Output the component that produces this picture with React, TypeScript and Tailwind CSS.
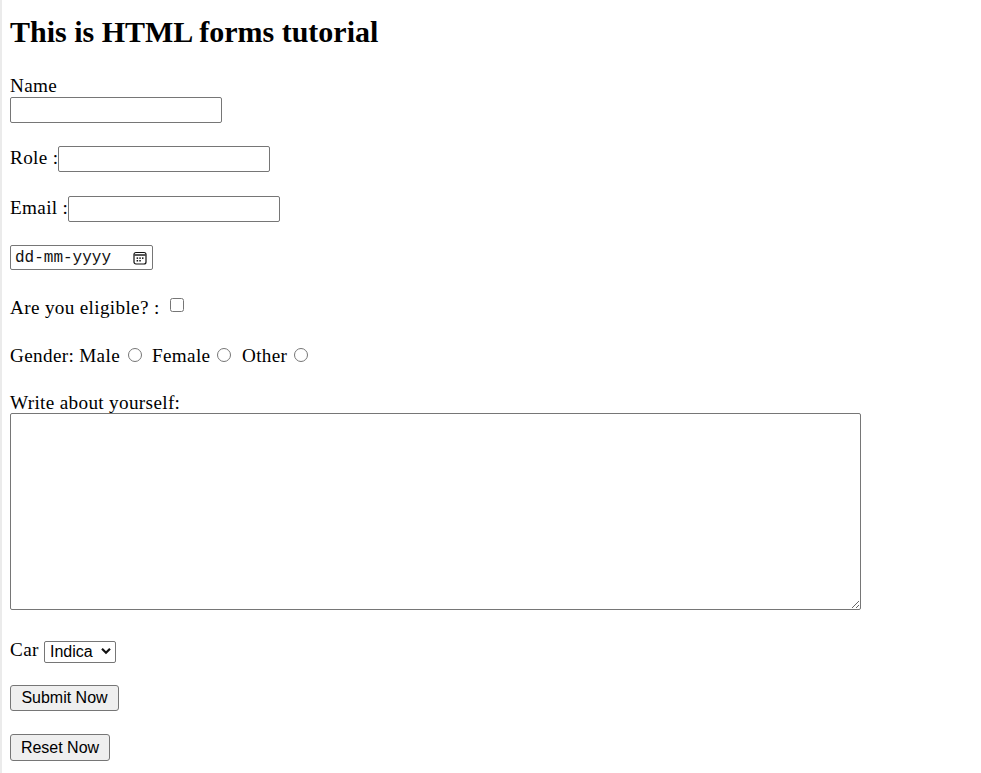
import React from "react";

function CalendarIcon() {
  return (
    <svg width="14" height="14" viewBox="0 0 14 14" fill="none">
      <rect x="1" y="1.5" width="12" height="11.5" rx="2" stroke="#111" strokeWidth="1.2" />
      <line x1="1.5" y1="4" x2="12.5" y2="4" stroke="#111" strokeWidth="1.4" />
      <rect x="3.6" y="6.4" width="1.5" height="1.5" fill="#111" />
      <rect x="6.3" y="6.4" width="1.5" height="1.5" fill="#111" />
      <rect x="9" y="6.4" width="1.5" height="1.5" fill="#111" />
      <rect x="3.6" y="9" width="1.5" height="1.5" fill="#111" />
      <rect x="6.3" y="9" width="1.5" height="1.5" fill="#111" />
    </svg>
  );
}

export default function App() {
  const inputCls =
    "w-[212px] h-[26px] shrink-0 border border-[#767676] rounded-[2px] bg-white px-[2px] font-['Liberation_Sans',Arial,sans-serif] text-[16px] tracking-normal outline-none";

  return (
    <div className="flex min-h-[773px] bg-white text-black font-['Liberation_Serif','Times_New_Roman',serif] text-[19.2px] leading-[22px] tracking-[0.33px]">
      {/* window edge */}
      <div className="w-[2px] shrink-0 bg-[#ebebeb]" />

      <form className="flex flex-col items-start pl-2">
        <h2 className="mt-[15px] h-[34px] text-[30px] leading-[34px] font-bold tracking-normal">
          This is HTML forms tutorial
        </h2>

        {/* Name */}
        <label className="mt-[26px] h-[22px]">Name</label>
        <input type="text" className={inputCls} />

        {/* Role */}
        <div className="mt-[23px] flex h-[26px] items-start whitespace-nowrap">
          <span className="mt-[1px] w-[48px] shrink-0">Role :</span>
          <input type="text" className={inputCls} />
        </div>

        {/* Email */}
        <div className="mt-[24px] flex h-[26px] items-start whitespace-nowrap">
          <span className="mt-[1px] w-[58px] shrink-0">Email :</span>
          <input type="email" className={inputCls} />
        </div>

        {/* Date */}
        <div className="mt-[23px] flex h-[25px] w-[143px] items-center justify-between rounded-[2px] border border-[#767676] pl-[4px] pr-[5px]">
          <span className="font-['Liberation_Mono','DejaVu_Sans_Mono',monospace] text-[16px] leading-[20px] tracking-normal text-[#111]">
            dd-mm-yyyy
          </span>
          <CalendarIcon />
        </div>

        {/* Eligible */}
        <div className="mt-[26px] flex h-[22px] items-start whitespace-nowrap">
          <span className="mt-[1px] w-[160px] shrink-0">Are you eligible? :</span>
          <input type="checkbox" className="mt-[2px] h-[14px] w-[14px]" />
        </div>

        {/* Gender */}
        <div className="mt-[26px] flex h-[22px] items-start whitespace-nowrap">
          <span className="mt-[1px] w-[118px] shrink-0">Gender: Male</span>
          <input type="radio" name="gender" className="mt-[4px] h-[14px] w-[14px]" />
          <span className="mt-[1px] ml-[10px] w-[65px] shrink-0">Female</span>
          <input type="radio" name="gender" className="mt-[4px] h-[14px] w-[14px]" />
          <span className="mt-[1px] ml-[11px] w-[52px] shrink-0">Other</span>
          <input type="radio" name="gender" className="mt-[4px] h-[14px] w-[14px]" />
        </div>

        {/* About */}
        <label className="mt-[26px] h-[21px]">Write about yourself:</label>
        <textarea className="h-[197px] w-[851px] resize rounded-[2px] border border-[#767676] bg-white p-[2px] font-['Liberation_Mono',monospace] text-[16px] outline-none" />

        {/* Car */}
        <div className="mt-[28px] flex h-[24px] items-start whitespace-nowrap">
          <span className="mt-[1px] w-[34px] shrink-0">Car</span>
          <div className="relative mt-[2px]">
            <select className="h-[22px] w-[72px] appearance-none rounded-[2px] border border-[#767676] bg-white pl-[5px] font-['Liberation_Sans',Arial,sans-serif] text-[16px] leading-[20px] tracking-normal outline-none">
              <option>Indica</option>
              <option>Nano</option>
              <option>Safari</option>
            </select>
            <svg
              className="pointer-events-none absolute left-[57px] top-[7px]"
              width="10"
              height="8"
              viewBox="0 0 10 8"
              fill="none"
            >
              <path d="M1 1.8 L5 5.8 L9 1.8" stroke="#111" strokeWidth="2.2" />
            </svg>
          </div>
        </div>

        {/* Buttons */}
        <button
          type="submit"
          className="mt-[23px] h-[26px] w-[109px] rounded-[3px] border border-[#767676] bg-[#efefef] font-['Liberation_Sans',Arial,sans-serif] text-[16px] leading-[20px] tracking-normal"
        >
          Submit Now
        </button>
        <button
          type="reset"
          className="mt-[23px] h-[27px] w-[100px] rounded-[3px] border border-[#767676] bg-[#efefef] font-['Liberation_Sans',Arial,sans-serif] text-[16px] leading-[20px] tracking-normal"
        >
          Reset Now
        </button>
      </form>
    </div>
  );
}
